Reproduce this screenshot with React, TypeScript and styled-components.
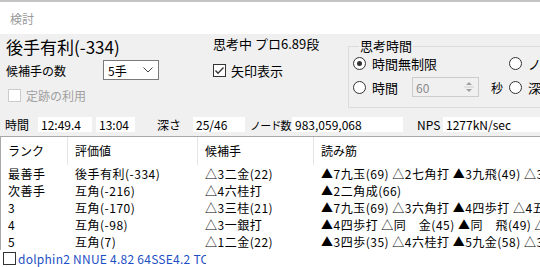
import React from "react";
import styled, { createGlobalStyle } from "styled-components";

const Global = createGlobalStyle`
  html, body { margin: 0; padding: 0; background: #ffffff; }
  body {
    font-family: "Noto Sans CJK JP", "Noto Sans", sans-serif;
    font-size: 12px;
    color: #000;
  }
`;

const Window = styled.div`
  width: 540px;
  height: 267px;
  overflow: hidden;
  display: flex;
  flex-direction: column;
  background: #fff;
`;

const TopEdge = styled.div`
  flex: none;
  height: 2px;
  background: #c4c4c4;
`;

const TitleBar = styled.div`
  flex: none;
  height: 32px;
  display: flex;
  align-items: center;
  padding-left: 10px;
  color: #9a9a9a;
  font-size: 12px;
`;

const Panel = styled.div`
  flex: none;
  height: 102px;
  background: #f0f0f0;
  display: flex;
  flex-direction: column;
`;

const Upper = styled.div`
  height: 83px;
  display: flex;
`;

const LeftCol = styled.div`
  width: 212px;
  flex: none;
  box-sizing: border-box;
  padding: 3px 0 0 6px;
  display: flex;
  flex-direction: column;
`;

const BigEval = styled.div`
  font-size: 17px;
  line-height: 20px;
  height: 20px;
  white-space: nowrap;
`;

const CandRow = styled.div`
  margin-top: 3px;
  height: 20px;
  display: flex;
  align-items: center;
`;

const CandLabel = styled.span`
  width: 97px;
  flex: none;
`;

const Select = styled.div`
  width: 56px;
  height: 20px;
  box-sizing: border-box;
  border: 1px solid #7a7a7a;
  background: #fff;
  display: flex;
  align-items: center;
  justify-content: space-between;
  padding: 0 5px 0 4px;
`;

const CheckRow = styled.div<{ $top: number; $left: number; $disabled?: boolean }>`
  margin-top: ${(p) => p.$top}px;
  padding-left: ${(p) => p.$left}px;
  height: 14px;
  display: flex;
  align-items: center;
  gap: 5px;
  color: ${(p) => (p.$disabled ? "#a0a0a0" : "#000")};
  white-space: nowrap;
`;

const CheckText = styled.span<{ $size: number }>`
  font-size: ${(p) => p.$size}px;
`;

const Box = styled.span<{ $disabled?: boolean }>`
  width: 13px;
  height: 13px;
  box-sizing: border-box;
  flex: none;
  border: 1px solid ${(p) => (p.$disabled ? "#cccccc" : "#333333")};
  background: #fff;
  display: flex;
  align-items: center;
  justify-content: center;
`;

const MidCol = styled.div`
  width: 136px;
  flex: none;
  box-sizing: border-box;
  padding: 2px 0 0 0;
  display: flex;
  flex-direction: column;
`;

const Status = styled.div`
  font-size: 13px;
  line-height: 16px;
  padding-left: 1px;
  white-space: nowrap;
`;

const Group = styled.fieldset`
  flex: 1;
  margin: 5px 0 0 0;
  padding: 0 0 9px 4px;
  height: 69px;
  box-sizing: border-box;
  border: 1px solid #dcdcdc;
  border-right: none;
  min-width: 0;
`;

const Legend = styled.legend`
  margin-left: 6px;
  padding: 0 1px;
  font-size: 13px;
  line-height: 14px;
`;

const GroupRow = styled.div<{ $top: number; $h: number }>`
  margin-top: ${(p) => p.$top}px;
  height: ${(p) => p.$h}px;
  display: grid;
  grid-template-columns: 156px 1fr;
  align-items: center;
  white-space: nowrap;
`;

const RadioItem = styled.div`
  display: flex;
  align-items: center;
  gap: 6px;
  font-size: 13px;
`;

const Radio = styled.span<{ $on?: boolean }>`
  width: 13px;
  height: 13px;
  box-sizing: border-box;
  border-radius: 50%;
  border: 1px solid #333;
  background: #fff;
  flex: none;
  display: flex;
  align-items: center;
  justify-content: center;
  &::after {
    content: "";
    width: 5px;
    height: 5px;
    border-radius: 50%;
    background: ${(p) => (p.$on ? "#333" : "transparent")};
  }
`;

const Spin = styled.div`
  width: 67px;
  height: 20px;
  box-sizing: border-box;
  border: 1px solid #cccccc;
  background: #f0f0f0;
  display: flex;
  align-items: center;
  justify-content: space-between;
  padding: 0 3px 0 3px;
  margin-left: 8px;
  color: #8a8a8a;
  font-size: 12px;
`;

const Sec = styled.span`
  margin-left: 6px;
  font-size: 12px;
`;

const StatsRow = styled.div`
  height: 15px;
  display: flex;
  align-items: center;
  white-space: nowrap;
`;

const StatLabel = styled.span<{ $ml: number; $w: number; $tight?: boolean }>`
  margin-left: ${(p) => p.$ml}px;
  width: ${(p) => p.$w}px;
  flex: none;
  font-size: ${(p) => (p.$tight ? 11 : 12)}px;
  letter-spacing: ${(p) => (p.$tight ? "-0.8px" : "0")};
`;

const StatField = styled.span<{ $w: number; $ml?: number }>`
  width: ${(p) => p.$w}px;
  margin-left: ${(p) => p.$ml ?? 0}px;
  height: 15px;
  flex: none;
  background: #fff;
  box-sizing: border-box;
  padding-left: 3px;
  line-height: 15px;
  overflow: hidden;
`;

const List = styled.div`
  flex: none;
  border-top: 1px solid #a8a8a8;
  border-left: 1px solid #a8a8a8;
  background: #fff;
`;

const Cols = styled.div<{ $h: number; $head?: boolean }>`
  display: grid;
  grid-template-columns: 67px 130px 116px 1fr;
  height: ${(p) => p.$h}px;
  align-items: ${(p) => (p.$head ? "start" : "center")};
  white-space: nowrap;
  letter-spacing: ${(p) => (p.$head ? "0" : "0.5px")};
`;

const Cell = styled.div<{ $head?: boolean; $sep?: boolean }>`
  padding-left: 7px;
  padding-top: ${(p) => (p.$head ? 6 : 0)}px;
  height: ${(p) => (p.$head ? "28px" : "auto")};
  box-sizing: border-box;
  border-right: ${(p) => (p.$head && p.$sep ? "1px solid #e5e5e5" : "none")};
  overflow: hidden;
  line-height: 16px;
`;

const Footer = styled.div`
  flex: none;
  height: 17px;
  display: flex;
  align-items: center;
  padding-left: 3px;
  gap: 2px;
`;

const Engine = styled.span`
  color: #1d4fc4;
  width: 188px;
  overflow: hidden;
  white-space: nowrap;
  letter-spacing: 0.25px;
`;

const Check = () => (
  <svg width="11" height="11" viewBox="0 0 11 11">
    <polyline points="1.5,5.5 4,8.2 9.5,2.5" fill="none" stroke="#333" strokeWidth="1.3" />
  </svg>
);

const Chevron = () => (
  <svg width="10" height="6" viewBox="0 0 10 6">
    <polyline points="0.5,0.5 5,5 9.5,0.5" fill="none" stroke="#444" strokeWidth="1" />
  </svg>
);

const SpinArrows = () => (
  <svg width="12" height="16" viewBox="0 0 12 16">
    <polygon points="3,6 9,6 6,3" fill="#a0a0a0" />
    <line x1="1" y1="8" x2="11" y2="8" stroke="#d0d0d0" />
    <polygon points="3,10 9,10 6,13" fill="#a0a0a0" />
  </svg>
);

const rows = [
  ["最善手", "後手有利(-334)", "△3二金(22)", "▲7九玉(69) △2七角打 ▲3九飛(49) △3八角成"],
  ["次善手", "互角(-216)", "△4六桂打", "▲2二角成(66)"],
  ["3", "互角(-170)", "△3三桂(21)", "▲7九玉(69) △3六角打 ▲4四歩打 △4五桂"],
  ["4", "互角(-98)", "△3一銀打", "▲4四歩打 △同　金(45) ▲同　飛(49) △4三歩"],
  ["5", "互角(7)", "△1二金(22)", "▲3四歩(35) △4六桂打 ▲5九金(58) △3八角"],
];

export default function App() {
  return (
    <Window>
      <Global />
      <TopEdge />
      <TitleBar>検討</TitleBar>
      <Panel>
        <Upper>
          <LeftCol>
            <BigEval>後手有利(-334)</BigEval>
            <CandRow>
              <CandLabel>候補手の数</CandLabel>
              <Select>
                <span>5手</span>
                <Chevron />
              </Select>
            </CandRow>
            <CheckRow $top={8} $left={2} $disabled>
              <Box $disabled />
              <CheckText $size={12}>定跡の利用</CheckText>
            </CheckRow>
          </LeftCol>
          <MidCol>
            <Status>思考中 プロ6.89段</Status>
            <CheckRow $top={11} $left={1}>
              <Box>
                <Check />
              </Box>
              <CheckText $size={13}>矢印表示</CheckText>
            </CheckRow>
          </MidCol>
          <Group>
            <Legend>思考時間</Legend>
            <GroupRow $top={1} $h={16}>
              <RadioItem>
                <Radio $on />
                <span>時間無制限</span>
              </RadioItem>
              <RadioItem>
                <Radio />
                <span>ノード数</span>
              </RadioItem>
            </GroupRow>
            <GroupRow $top={7} $h={20}>
              <RadioItem>
                <Radio />
                <span>時間</span>
                <Spin>
                  <span>60</span>
                  <SpinArrows />
                </Spin>
                <Sec>秒</Sec>
              </RadioItem>
              <RadioItem>
                <Radio />
                <span>深さ</span>
              </RadioItem>
            </GroupRow>
          </Group>
        </Upper>
        <StatsRow>
          <StatLabel $ml={5} $w={33}>時間</StatLabel>
          <StatField $w={54}>12:49.4</StatField>
          <StatField $w={39} $ml={4}>13:04</StatField>
          <StatLabel $ml={22} $w={36}>深さ</StatLabel>
          <StatField $w={52}>25/46</StatField>
          <StatLabel $ml={5} $w={42} $tight>ノード数</StatLabel>
          <StatField $w={111}>983,059,068</StatField>
          <StatLabel $ml={14} $w={26}>NPS</StatLabel>
          <StatField $w={100}>1277kN/sec</StatField>
        </StatsRow>
      </Panel>
      <List>
        <Cols $h={28} $head>
          <Cell $head $sep>ランク</Cell>
          <Cell $head $sep>評価値</Cell>
          <Cell $head $sep>候補手</Cell>
          <Cell $head>読み筋</Cell>
        </Cols>
        {rows.map((r, i) => (
          <Cols key={i} $h={17}>
            {r.map((c, j) => (
              <Cell key={j}>{c}</Cell>
            ))}
          </Cols>
        ))}
      </List>
      <Footer>
        <Box />
        <Engine>dolphin2 NNUE 4.82 64SSE4.2 TCE</Engine>
      </Footer>
    </Window>
  );
}
